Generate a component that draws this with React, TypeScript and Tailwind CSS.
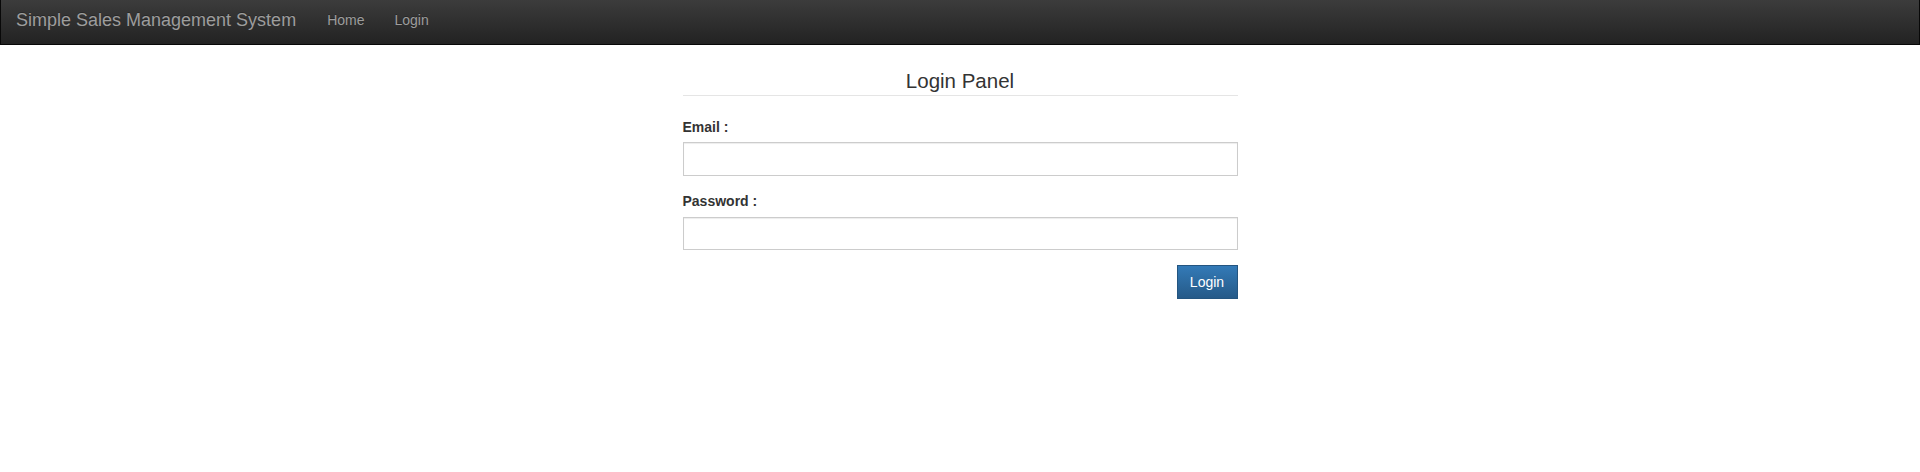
export default function App() {
  return (
    <div className="min-h-[472px] bg-white font-['Liberation_Sans',Arial,sans-serif] text-[#333]">
      <nav className="h-[45px] border-x border-b border-[#080808] bg-[linear-gradient(to_bottom,#3c3c3c_0%,#222222_100%)]">
        <div className="flex pl-[15px] pt-[10px]">
          <span className="text-[18px] leading-[20px] text-[#9d9d9d] [text-shadow:0_-1px_0_rgba(0,0,0,0.25)]">
            Simple Sales Management System
          </span>
          <span className="ml-[31px] text-[14px] leading-[20px] text-[#9d9d9d] [text-shadow:0_-1px_0_rgba(0,0,0,0.25)]">
            Home
          </span>
          <span className="ml-[30px] text-[14px] leading-[20px] text-[#9d9d9d] [text-shadow:0_-1px_0_rgba(0,0,0,0.25)]">
            Login
          </span>
        </div>
      </nav>
      <div className="mx-auto w-[555px]">
        <h3 className="mt-[25px] border-b border-[#e5e5e5] pb-[3px] text-center text-[20.5px] leading-[22px] text-[#333]">
          Login Panel
        </h3>
        <form className="flex flex-col" onSubmit={(e) => e.preventDefault()}>
          <label className="mt-[21px] text-[14px] font-bold leading-[20px] text-[#333]">Email :</label>
          <input
            type="email"
            className="mt-[5px] h-[34px] w-full border border-[#cccccc] bg-white px-3 text-[14px] shadow-[inset_0_1px_1px_rgba(0,0,0,0.075)] outline-none"
          />
          <label className="mt-[15px] text-[14px] font-bold leading-[20px] text-[#333]">Password :</label>
          <input
            type="password"
            className="mt-[6px] h-[33px] w-full border border-[#cccccc] bg-white px-3 text-[14px] shadow-[inset_0_1px_1px_rgba(0,0,0,0.075)] outline-none"
          />
          <div className="mt-[15px] flex justify-end">
            <button
              type="submit"
              className="h-[34px] w-[61px] border border-[#245580] bg-[linear-gradient(to_bottom,#337ab7_0%,#265a88_100%)] text-[14px] leading-[20px] text-white"
            >
              Login
            </button>
          </div>
        </form>
      </div>
    </div>
  );
}
